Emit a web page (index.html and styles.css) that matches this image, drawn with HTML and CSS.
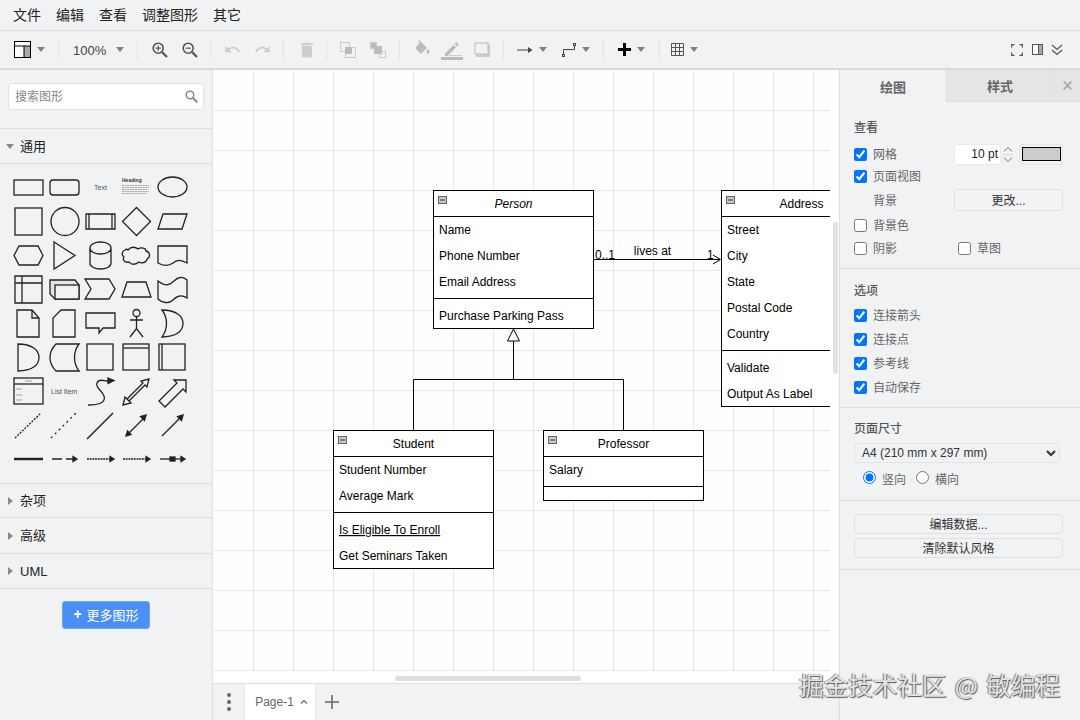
FILE: index.html
```html
<!DOCTYPE html>
<html lang="zh">
<head>
<meta charset="utf-8">
<title>draw.io</title>
<link rel="stylesheet" href="styles.css">
</head>
<body>
<div class="app">
  <nav class="menubar">
    <span class="menu-item">文件</span><span class="menu-item">编辑</span><span class="menu-item">查看</span><span class="menu-item">调整图形</span><span class="menu-item">其它</span>
  </nav>

  <div class="toolbar">
    <div class="g g-layout">
      <svg class="ic" width="17" height="17" viewBox="0 0 17 17"><rect x=".5" y=".5" width="16" height="16" fill="#fff" stroke="#000"/><rect x="10" y="5" width="6" height="11" fill="#aaa"/><path d="M0 5H17M10 5V17" stroke="#000" fill="none"/></svg>
      <i class="caret"></i>
    </div>
    <span class="sep"></span>
    <div class="g g-zoom"><span class="zoom-val">100%</span><i class="caret"></i></div>
    <span class="sep"></span>
    <div class="g g-a">
      <span class="btn"><svg width="16" height="16" viewBox="0 0 16 16" fill="none" stroke="#555" stroke-width="1.6"><circle cx="6.2" cy="6.2" r="5"/><path d="M10 10l5 5" stroke-width="2.2"/><path d="M3.7 6.2h5M6.2 3.7v5" stroke-width="1.2"/></svg></span>
      <span class="btn"><svg width="16" height="16" viewBox="0 0 16 16" fill="none" stroke="#555" stroke-width="1.6"><circle cx="6.2" cy="6.2" r="5"/><path d="M10 10l5 5" stroke-width="2.2"/><path d="M3.7 6.2h5" stroke-width="1.2"/></svg></span>
    </div>
    <span class="sep"></span>
    <div class="g g-b">
      <span class="btn"><svg width="17" height="17" viewBox="0 0 24 24" fill="#ccc"><path d="M12.5 8c-2.65 0-5.05.99-6.9 2.6L2 7v9h9l-3.62-3.62c1.39-1.16 3.16-1.88 5.12-1.88 3.54 0 6.55 2.31 7.6 5.5l2.37-.78C21.08 11.03 17.15 8 12.5 8z"/></svg></span>
      <span class="btn"><svg width="17" height="17" viewBox="0 0 24 24" fill="#ccc"><path d="M18.4 10.6C16.55 8.99 14.15 8 11.5 8c-4.65 0-8.58 3.03-9.96 7.22L3.9 16c1.05-3.19 4.05-5.5 7.6-5.5 1.95 0 3.73.72 5.12 1.88L13 16h9V7l-3.6 3.6z"/></svg></span>
    </div>
    <span class="sep"></span>
    <div class="g g-c">
      <span class="btn"><svg width="20" height="20" viewBox="0 0 24 24" fill="#ccc"><path d="M6 19c0 1.1.9 2 2 2h8c1.1 0 2-.9 2-2V7H6v12zM19 4h-3.5l-1-1h-5l-1 1H5v2h14V4z"/></svg></span>
    </div>
    <span class="sep"></span>
    <div class="g g-b">
      <span class="btn"><svg width="16" height="16" viewBox="0 0 16 16"><rect x="5.5" y="5.5" width="10" height="10" fill="none" stroke="#ccc"/><rect x=".5" y=".5" width="9" height="9" fill="none" stroke="#ccc"/><rect x="5" y="5" width="7" height="7" fill="#bbb"/></svg></span>
      <span class="btn"><svg width="16" height="16" viewBox="0 0 16 16"><rect x=".5" y=".5" width="6" height="6" fill="#bbb" stroke="#ccc"/><rect x="9.5" y="9.5" width="6" height="6" fill="none" stroke="#ccc"/><rect x="4" y="4" width="8" height="8" fill="#bbb"/></svg></span>
    </div>
    <span class="sep"></span>
    <div class="g g-d">
      <span class="btn"><svg width="19" height="19" viewBox="0 0 24 24" fill="#bbb"><path d="M16.56 8.94L7.62 0 6.21 1.41l2.38 2.38-5.15 5.15c-.59.59-.59 1.54 0 2.12l5.5 5.5c.29.29.68.44 1.06.44s.77-.15 1.06-.44l5.5-5.5c.59-.58.59-1.53 0-2.12zM19 11.5s-2 2.17-2 3.5c0 1.1.9 2 2 2s2-.9 2-2c0-1.33-2-3.5-2-3.5z"/></svg></span>
      <span class="btn"><svg width="22" height="20" viewBox="0 0 22 20"><path d="M4 13.5V16h2.5l8.6-8.6-2.5-2.5zM13.6 3.9l2.5 2.5 1.7-1.7-2.5-2.5z" fill="#bbb"/><path d="M8 15.5H21" stroke="#ccc"/><rect x="0" y="17" width="22" height="3" fill="#bbb"/></svg></span>
      <span class="btn"><svg width="16" height="16" viewBox="0 0 16 16"><rect x="2" y="3" width="14" height="12" fill="#ccc"/><rect x="1" y="1" width="13" height="11" fill="#f1f2f4" stroke="#bbb"/></svg></span>
    </div>
    <span class="sep"></span>
    <div class="g g-e">
      <svg class="ic" width="16" height="8" viewBox="0 0 16 8"><path d="M0 4H14" stroke="#444"/><path d="M11 1l4.500 3L11 7z" fill="#444"/></svg>
      <i class="caret"></i>
      <svg class="ic ic-gap" width="14" height="16" viewBox="0 0 14 16" fill="none" stroke="#444"><rect x=".5" y="12.500" width="2" height="2"/><rect x="11.500" y="1.500" width="2" height="2"/><path d="M1.500 12.500V7.500H12.500V3.500"/></svg>
      <i class="caret"></i>
    </div>
    <span class="sep"></span>
    <div class="g g-f">
      <svg class="ic" width="13" height="13" viewBox="0 0 13 13"><path d="M5 0h3v5h5v3H8v5H5V8H0V5h5z" fill="#000"/></svg>
      <i class="caret"></i>
    </div>
    <span class="sep"></span>
    <div class="g g-g">
      <svg class="ic" width="13" height="13" viewBox="0 0 13 13" fill="none" stroke="#555"><path d="M.5.500h12v12H.5zM.5 4.500h12M.5 8.500h12M4.500.500v12M8.500.500v12"/></svg>
      <i class="caret"></i>
    </div>
    <div class="g-right">
      <span class="btn-s"><svg width="12" height="12" viewBox="0 0 12 12" fill="none" stroke="#555" stroke-width="1.300"><path d="M.7 3.500V.7h2.800M8.500.7h2.800v2.800M.7 8.500v2.800h2.800M8.500 11.300h2.800V8.500"/></svg></span>
      <span class="btn-s"><svg width="11" height="11" viewBox="0 0 11 11"><rect x=".5" y=".5" width="10" height="10" fill="#fff" stroke="#555"/><rect x="7" y="1" width="3" height="9" fill="#aaa"/><path d="M6.500 0v11" stroke="#555"/></svg></span>
      <span class="btn-s"><svg width="12" height="12" viewBox="0 0 12 12" fill="none" stroke="#555" stroke-width="1.200"><path d="M1 1l5 4.500L11 1M1 6l5 4.500L11 6"/></svg></span>
    </div>
  </div>

  <div class="main">
    <aside class="sidebar">
      <div class="search-wrap">
        <div class="search">
          <span class="search-ph">搜索图形</span>
          <svg width="13" height="13" viewBox="0 0 13 13" fill="none" stroke="#888" stroke-width="1.500"><circle cx="5" cy="5" r="3.800"/><path d="M8 8l4.300 4.300" stroke-width="2"/></svg>
        </div>
      </div>
      <div class="sec-head sec-head-general"><i class="tri-down"></i><span class="cjk">通用</span></div>
      <div class="shapes">
        <svg width="212" height="319" viewBox="0 164 212 319" fill="none" stroke="#222" stroke-width="1.300">
          <rect x="14" y="180" width="29" height="15"/>
          <rect x="50" y="180" width="29" height="15" rx="3"/>
          <text class="tiny" x="100.500" y="190" text-anchor="middle">Text</text>
          <text class="tiny-b" x="122" y="182">Heading</text>
          <path d="M122 185.500h27M122 187.500h27M122 189.500h26M122 191.500h27M122 193.500h25" stroke="#777" stroke-width=".6" stroke-dasharray="2 .6"/>
          <ellipse cx="172.500" cy="187" rx="14.500" ry="10"/>

          <rect x="15" y="208" width="27" height="27"/>
          <circle cx="65" cy="221.500" r="14"/>
          <path d="M86 214h29v15H86zM89 214v15M112 214v15"/>
          <path d="M136.500 207.500l14 14-14 14-14-14z"/>
          <path d="M163 214h24l-5 15h-24z"/>

          <path d="M19 246h19l5 9.500-5 9.500H19l-5-9.500z"/>
          <path d="M54 242l21 13.500-21 13.500z"/>
          <path d="M90 248c0-8 21-8 21 0v15c0 8-21 8-21 0zM90 248c0 8 21 8 21 0"/>
          <path d="M128 250c3-4 8-3 10-1 3-2 8-1 8 2 4 1 5 6 1 8 0 3-5 5-8 3-3 3-8 3-10 0-4 1-7-2-5-5-3-2-2-6 1-7 1-1 2-1 3 0z"/>
          <path d="M158 246h29v17c-7-4-10-3-14 0s-10 3-15 0z"/>

          <path d="M15 276h27v27H15zM15 283h27M22 276v27"/>
          <path d="M50 280h25l4 5v14H55l-5-5z" fill="#e4e4e4"/>
          <rect x="55" y="285" width="24" height="14" fill="#f1f2f4"/>
          <path d="M85 279h24l6 10-6 10H85l6-10z"/>
          <path d="M127 282h19l5 15h-29z"/>
          <path d="M158 281c8 6 12 4 16 0s9-5 13-1v18c-6-4-10-2-14 2s-11 3-15-1z"/>

          <path d="M17 310h15l7 8v19H17zM32 310v8h7"/>
          <path d="M61 310h14v27H53v-19z"/>
          <path d="M86 313h29v15h-12l-4 5v-5H86z"/>
          <circle cx="136.500" cy="313" r="3.500"/>
          <path d="M136.500 316.500v12M130 320h13M130 337l6.500-8.500 6.500 8.500"/>
          <path d="M162 310c14 0 21 6 21 13.500S176 337 162 337c6-8 6-19 0-27z"/>

          <path d="M18 344c14 0 21 6 21 13.500S32 371 18 371z"/>
          <path d="M56 344h23c-6 8-6 19 0 27H56c-8-8-8-19 0-27z"/>
          <rect x="87" y="344" width="26" height="26"/>
          <rect x="123" y="344" width="26" height="26"/>
          <path d="M123 348h26"/>
          <rect x="159" y="344" width="26" height="26"/>
          <path d="M162 344v26"/>

          <rect x="14" y="378" width="29" height="26"/>
          <path d="M14 384h29"/>
          <path d="M16 389h6M16 395h6M16 400h6M25 381h7" stroke="#888" stroke-width=".8"/>
          <text class="tiny" x="51" y="394">List Item</text>
          <path d="M88 405c12 0 18-3 16-9s-9-8-7-13 7-2 10-2 4 0 6-1"/>
          <path d="M108 378l6 2.500-6 3z" fill="#222"/>
          <path d="M123 405l2-8 2 2 16-16-2-2 8-2-2 8-2-2-16 16 2 2zM127 399l3 3" />
          <path d="M159 401l18-18-3-3h12v12l-3-3-18 18z"/>

          <path d="M15 438l26-25" stroke-dasharray="2 1.300"/>
          <path d="M51 438l25-25" stroke-dasharray="2 3.500"/>
          <path d="M87 439l26-26" stroke-width="1.500"/>
          <path d="M128 434l17-17" stroke-width="1.200"/>
          <path d="M126 436l1.500-5 3.500 3.500zM146 415l-1.500 5.500-4-4z" fill="#222"/>
          <path d="M162 436l18-18"/>
          <path d="M183 415l-1.500 5.500-4-4z" fill="#222"/>

          <path d="M14 459h29" stroke-width="2.400"/>
          <path d="M52 459h10M66 459h8" /><path d="M73 456.500l4 2.500-4 2.500z" fill="#222"/>
          <path d="M87 459h23" stroke-dasharray="2 .7"/><path d="M110 456.500l4 2.500-4 2.500z" fill="#222"/>
          <path d="M123 459h23" stroke-dasharray="2 .7"/><path d="M146 456.500l4 2.500-4 2.500z" fill="#222"/>
          <path d="M160 459h21"/><rect x="170" y="457" width="5" height="4" fill="#222"/><path d="M181 456.500l4 2.500-4 2.500z" fill="#222"/>
        </svg>
      </div>
      <div class="sec-head sec-head-a"><i class="tri-right"></i><span class="cjk">杂项</span></div>
      <div class="sec-head sec-head-b"><i class="tri-right"></i><span class="cjk">高级</span></div>
      <div class="sec-head sec-head-c"><i class="tri-right"></i><span>UML</span></div>
      <div class="more-wrap"><span class="more-btn"><b class="more-plus">+</b>更多图形</span></div>
    </aside>

    <div class="center">
      <div class="canvas">
        <div class="grid"></div>
        <svg class="diagram" width="617" height="613" viewBox="213 70 617 613">
          <g class="uml">
            <rect x="433.500" y="190.500" width="160" height="138"/>
            <path d="M433.500 216.500h160M433.500 298.500h160"/>
            <rect x="721.500" y="190.500" width="160" height="216"/>
            <path d="M721.500 216.500h160M721.500 350.500h160"/>
            <rect x="333.500" y="430.500" width="160" height="138"/>
            <path d="M333.500 456.500h160M333.500 512.500h160"/>
            <rect x="543.500" y="430.500" width="160" height="70"/>
            <path d="M543.500 456.500h160M543.500 486.500h160"/>
            <path d="M593.500 259.500H720M713 255l7.500 4.500-7.500 4.500"/>
            <path d="M513.500 329l6 12h-12zM513.500 341v38.500M413.500 430V379.500H623.500V430"/>
          </g>
          <g class="collapse">
            <rect x="438.500" y="196.500" width="8" height="7"/><path d="M440 200h5"/>
            <rect x="726.500" y="196.500" width="8" height="7"/><path d="M728 200h5"/>
            <rect x="338.500" y="436.500" width="8" height="7"/><path d="M340 440h5"/>
            <rect x="548.500" y="436.500" width="8" height="7"/><path d="M550 440h5"/>
          </g>
          <g class="utext" transform="translate(0 1)">
            <text class="it mid" x="513.500" y="207">Person</text>
            <text x="439" y="233">Name</text>
            <text x="439" y="259">Phone Number</text>
            <text x="439" y="285">Email Address</text>
            <text x="439" y="319">Purchase Parking Pass</text>
            <text class="mid" x="801.500" y="207">Address</text>
            <text x="727" y="233">Street</text>
            <text x="727" y="259">City</text>
            <text x="727" y="285">State</text>
            <text x="727" y="311">Postal Code</text>
            <text x="727" y="337">Country</text>
            <text x="727" y="371">Validate</text>
            <text x="727" y="397">Output As Label</text>
            <text class="mid" x="413.500" y="447">Student</text>
            <text x="339" y="473">Student Number</text>
            <text x="339" y="499">Average Mark</text>
            <text class="ul" x="339" y="533">Is Eligible To Enroll</text>
            <text x="339" y="559">Get Seminars Taken</text>
            <text class="mid" x="623.500" y="447">Professor</text>
            <text x="549" y="473">Salary</text>
          </g>
          <g class="utext">
            <text x="595" y="259">0..1</text>
            <text class="mid" x="652.500" y="255">lives at</text>
            <text x="707" y="259">1</text>
          </g>
        </svg>
        <span class="hscroll"></span>
        <span class="vscroll"></span>
      </div>
      <div class="pagebar">
        <span class="dots"><i></i><i></i><i></i></span>
        <span class="page-tab">Page-1<svg width="8" height="6" viewBox="0 0 8 6" fill="none" stroke="#666" stroke-width="1.200"><path d="M1 4.500l3-3 3 3"/></svg></span>
        <span class="page-add"><svg width="14" height="14" viewBox="0 0 14 14"><path d="M7 0v14M0 7h14" stroke="#666" stroke-width="1.600"/></svg></span>
      </div>
    </div>

    <aside class="panel">
      <div class="tabs">
        <span class="tab tab-on">绘图</span><span class="tab">样式</span><span class="tab tab-x"><svg width="9" height="9" viewBox="0 0 9 9" stroke="#aaa" stroke-width="1.800"><path d="M.7.700l7.600 7.600M8.300.700L.7 8.300"/></svg></span>
      </div>
      <section class="psec psec-1">
        <h4 class="ph">查看</h4>
        <div class="row r-grid">
          <label class="lab w-lab"><input type="checkbox" checked><span>网格</span></label>
          <span class="num">10 pt</span>
          <span class="spin"><svg width="12" height="21" viewBox="0 0 12 21" fill="none" stroke="#777"><path d="M2 7.500l4-4 4 4M2 13.500l4 4 4-4"/><path d="M1 10.500h10" stroke="#ddd"/></svg></span>
          <span class="swatch"><i></i></span>
        </div>
        <div class="row r-22"><label class="lab"><input type="checkbox" checked><span>页面视图</span></label></div>
        <div class="row r-bg"><span class="lab-plain">背景</span><span class="pbtn pbtn-change">更改...</span></div>
        <div class="row r-bgc"><label class="lab"><input type="checkbox"><span>背景色</span></label></div>
        <div class="row r-sh">
          <label class="lab w-lab2"><input type="checkbox"><span>阴影</span></label>
          <label class="lab"><input type="checkbox"><span>草图</span></label>
        </div>
      </section>
      <section class="psec psec-2">
        <h4 class="ph">选项</h4>
        <div class="opts">
          <div class="row r-24"><label class="lab"><input type="checkbox" checked><span>连接箭头</span></label></div>
          <div class="row r-24"><label class="lab"><input type="checkbox" checked><span>连接点</span></label></div>
          <div class="row r-24"><label class="lab"><input type="checkbox" checked><span>参考线</span></label></div>
          <div class="row r-24"><label class="lab"><input type="checkbox" checked><span>自动保存</span></label></div>
        </div>
      </section>
      <section class="psec psec-3">
        <h4 class="ph">页面尺寸</h4>
        <select class="sel"><option>A4 (210 mm x 297 mm)</option></select>
        <div class="row r-radio">
          <label class="lab lab-r"><input type="radio" name="o" checked><span>竖向</span></label>
          <label class="lab lab-r"><input type="radio" name="o"><span>横向</span></label>
        </div>
      </section>
      <section class="psec psec-4">
        <span class="pbtn">编辑数据...</span>
        <span class="pbtn">清除默认风格</span>
      </section>
    </aside>
  </div>
  <div class="watermark">掘金技术社区 @ 敏编程</div>
</div>
</body>
</html>
```
FILE: styles.css
```css
* { box-sizing: border-box; }
html, body { margin: 0; padding: 0; }
body {
  font-family: "Liberation Sans", "Noto Sans CJK SC", sans-serif;
  font-size: 12px;
  color: #333;
  background: #f1f2f4;
  overflow: hidden;
}
.app { position: relative; width: 1080px; height: 720px; display: flex; flex-direction: column; overflow: hidden; }

/* menu */
.menubar { height: 31px; display: flex; align-items: center; padding-left: 13px; gap: 15px; border-bottom: 1px solid #dcdee1; font-size: 14px; color: #222; flex: none; }
.menu-item { line-height: 30px; }

/* toolbar */
.toolbar { height: 39px; display: flex; align-items: center; border-bottom: 2px solid #d9dadc; flex: none; }
.g, .g-right { display: flex; align-items: center; }
.sep { width: 1px; height: 20px; background: #e3e4e6; flex: none; }
.caret { display: block; width: 0; height: 0; border: 4px solid transparent; border-top: 5px solid #808080; border-bottom: 0; margin-left: 6px; flex: none; }
.btn { width: 30px; display: flex; justify-content: center; align-items: center; }
.btn-s { width: 20px; display: flex; justify-content: center; align-items: center; }
.ic { display: block; flex: none; }
.ic-gap { margin-left: 15px; }
.g-layout { padding: 0 13px 0 14px; }
.g-zoom { padding: 0 13px 0 14px; }
.zoom-val { width: 34px; font-size: 13px; color: #444; margin-right: 3px; padding-top: 2px; }
.g-a { padding: 0 5px 0 7px; }
.g-b { padding: 0 6px; }
.g-c { padding: 0 4px 0 8px; }
.g-d { padding: 0 6px 0 7px; }
.g-e { padding: 0 13px 0 13px; }
.g-f { padding: 0 14px 0 14px; }
.g-g { padding: 0 0 0 11px; }
.g-right { margin-left: auto; padding-right: 13px; }

.main { flex: 1; display: flex; min-height: 0; }

/* sidebar */
.sidebar { width: 213px; flex: none; border-right: 1px solid #dcdee1; display: flex; flex-direction: column; }
.search-wrap { height: 59px; padding: 13px 8px 0; border-bottom: 1px solid #dcdee1; }
.search { height: 27px; background: #fff; border: 1px solid #dfe1e4; border-radius: 4px; display: flex; align-items: center; justify-content: space-between; padding: 0 5px 0 6px; }
.search-ph { color: #888; font-size: 12px; padding-bottom: 2px; }
.sec-head { display: flex; align-items: center; font-size: 13px; color: #222; border-bottom: 1px solid #dcdee1; }
.cjk { padding-bottom: 2px; }
.sec-head-general { height: 35px; padding-left: 6px; }
.sec-head-a { height: 34px; padding-left: 8px; }
.sec-head-b { height: 36px; padding-left: 8px; }
.sec-head-c { height: 35px; padding-left: 8px; }
.tri-down { width: 0; height: 0; border: 4px solid transparent; border-top: 5px solid #888; border-bottom: 0; margin-right: 6px; }
.tri-right { width: 0; height: 0; border: 4px solid transparent; border-left: 5px solid #888; border-right: 0; margin-right: 7px; }
.shapes { height: 320px; border-bottom: 1px solid #dcdee1; }
.shapes svg { display: block; }
.tiny { font-size: 7px; fill: #555; stroke: none; }
.tiny-b { font-size: 5px; fill: #333; stroke: none; font-weight: bold; }
.more-wrap { display: flex; justify-content: center; padding: 12px 0 0 0; }
.more-btn { width: 88px; height: 28px; background: #4a8ff5; border: 1px solid #71a5f2; border-radius: 3px; color: #fff; font-size: 13px; display: flex; align-items: center; justify-content: center; padding-bottom: 2px; }
.more-plus { font-size: 14px; margin-right: 5px; line-height: 1; }

/* canvas */
.center { width: 626px; flex: none; display: flex; flex-direction: column; }
.canvas { position: relative; flex: 1; background: #fff; overflow: hidden; }
.grid {
  height: 601px;
  width: 617px;
  background-color: #fff;
  background-image:
    linear-gradient(to right, #e6e6e6 1px, transparent 1px),
    linear-gradient(to bottom, #e6e6e6 1px, transparent 1px),
    linear-gradient(to right, #fafafa 1px, transparent 1px),
    linear-gradient(to bottom, #fafafa 1px, transparent 1px);
  background-size: 40px 40px, 40px 40px, 8px 8px, 8px 8px;
  box-shadow: inset 1px 1px 0 #fff;
}
.diagram { position: absolute; left: 0; top: 0; }
.uml { fill: none; stroke: #000; stroke-width: 1; }
.uml rect { fill: #fff; }
.collapse { fill: #c8c8c8; stroke: #666; stroke-width: 1; }
.collapse path { stroke: #333; }
.utext { font-size: 12px; fill: #000; font-family: "Liberation Sans", sans-serif; }
.mid { text-anchor: middle; }
.it { font-style: italic; }
.ul { text-decoration: underline; }
.hscroll { position: absolute; left: 182px; top: 606px; width: 186px; height: 5px; border-radius: 3px; background: #dedede; }
.vscroll { position: absolute; left: 620px; top: 152px; width: 5px; height: 152px; border-radius: 3px; background: #e2e2e2; }

/* page bar */
.pagebar { height: 37px; flex: none; border-top: 1px solid #dcdee1; display: flex; align-items: stretch; background: #f1f2f4; }
.dots { width: 31px; display: flex; flex-direction: column; justify-content: center; align-items: center; gap: 3px; }
.dots i { width: 4px; height: 4px; border-radius: 50%; background: #666; display: block; }
.page-tab { width: 72px; background: #fff; color: #666; font-size: 12px; display: flex; align-items: center; justify-content: center; gap: 6px; padding-left: 3px; border-left: 1px solid #e8e8e8; border-right: 1px solid #e8e8e8; }
.page-add { width: 32px; display: flex; align-items: center; justify-content: center; }

/* panel */
.panel { width: 241px; flex: none; border-left: 1px solid #dcdee1; display: flex; flex-direction: column; }
.tabs { height: 32px; display: flex; flex: none; }
.tab { width: 107px; background: #e5e5e5; border-bottom: 1px solid #dcdee1; border-left: 1px solid #dcdee1; font-size: 13px; font-weight: bold; color: #666; display: flex; align-items: center; justify-content: center; }
.tab-on { width: 106px; background: #f1f2f4; border: 0; color: #666; }
.tab-x { width: 27px; }
.psec { border-bottom: 1px solid #dcdee1; padding-left: 14px; padding-right: 17px; }
.psec-1 { height: 167px; padding-top: 17px; }
.psec-2 { height: 139px; padding-top: 13px; }
.psec-3 { height: 93px; padding-top: 12px; }
.psec-4 { height: 69px; padding-top: 13px; display: flex; flex-direction: column; gap: 4px; }
.ph { margin: 0; font-size: 12px; font-weight: 500; line-height: 18px; color: #555; }
.row { display: flex; align-items: center; color: #666; }
.r-grid { height: 22px; margin-top: 6px; }
.r-22 { height: 22px; }
.r-bg { height: 22px; margin-top: 2px; }
.r-bgc { height: 22px; margin-top: 3px; }
.r-sh { height: 22px; margin-top: 1px; }
.opts { margin-top: 3px; }
.r-24 { height: 24px; }
.r-radio { height: 22px; margin-top: 5px; padding-left: 9px; gap: 10px; }
.lab { display: flex; align-items: center; gap: 6px; color: #666; font-size: 12px; }
.lab span { padding-bottom: 2px; }
.lab input { margin: 0; width: 13px; height: 13px; flex: none; accent-color: #0075ff; }
.lab-r input { margin-top: -3px; }
.w-lab { width: 100px; }
.w-lab2 { width: 104px; }
.lab-plain { width: 100px; padding-left: 19px; padding-bottom: 2px; color: #666; }
.num { width: 47px; height: 21px; background: #fff; border-radius: 3px; border: 1px solid #e8e9eb; color: #222; display: flex; align-items: center; justify-content: flex-end; padding-right: 2px; }
.spin { width: 14px; display: flex; justify-content: center; }
.swatch { margin-left: 4px; width: 44px; height: 21px; border: 1px solid #e3e4e6; border-radius: 3px; display: flex; align-items: center; justify-content: center; }
.swatch i { display: block; width: 39px; height: 14px; background: #ccc; border: 1px solid #000; }
.pbtn { height: 20px; background: #f1f2f4; border: 1px solid #dfe0e2; border-radius: 3px; color: #333; display: flex; align-items: center; justify-content: center; padding-bottom: 2px; }
.pbtn-change { width: 109px; height: 22px; }
.sel { display: block; width: 206px; height: 20px; margin-top: 5px; font: 12px "Liberation Sans", "Noto Sans CJK SC", sans-serif; color: #333; background: #f1f2f4; border: 1px solid #e3e4e6; border-radius: 3px; padding-left: 3px; }

/* watermark */
.watermark { position: absolute; right: 20px; top: 669px; font-size: 24.500px; word-spacing: 3px; line-height: 32px; font-family: "Noto Sans CJK SC", sans-serif; color: #e4e4e4; text-shadow: 1px 1px 1px #555, -1px 0 1px #777; white-space: nowrap; }
```
